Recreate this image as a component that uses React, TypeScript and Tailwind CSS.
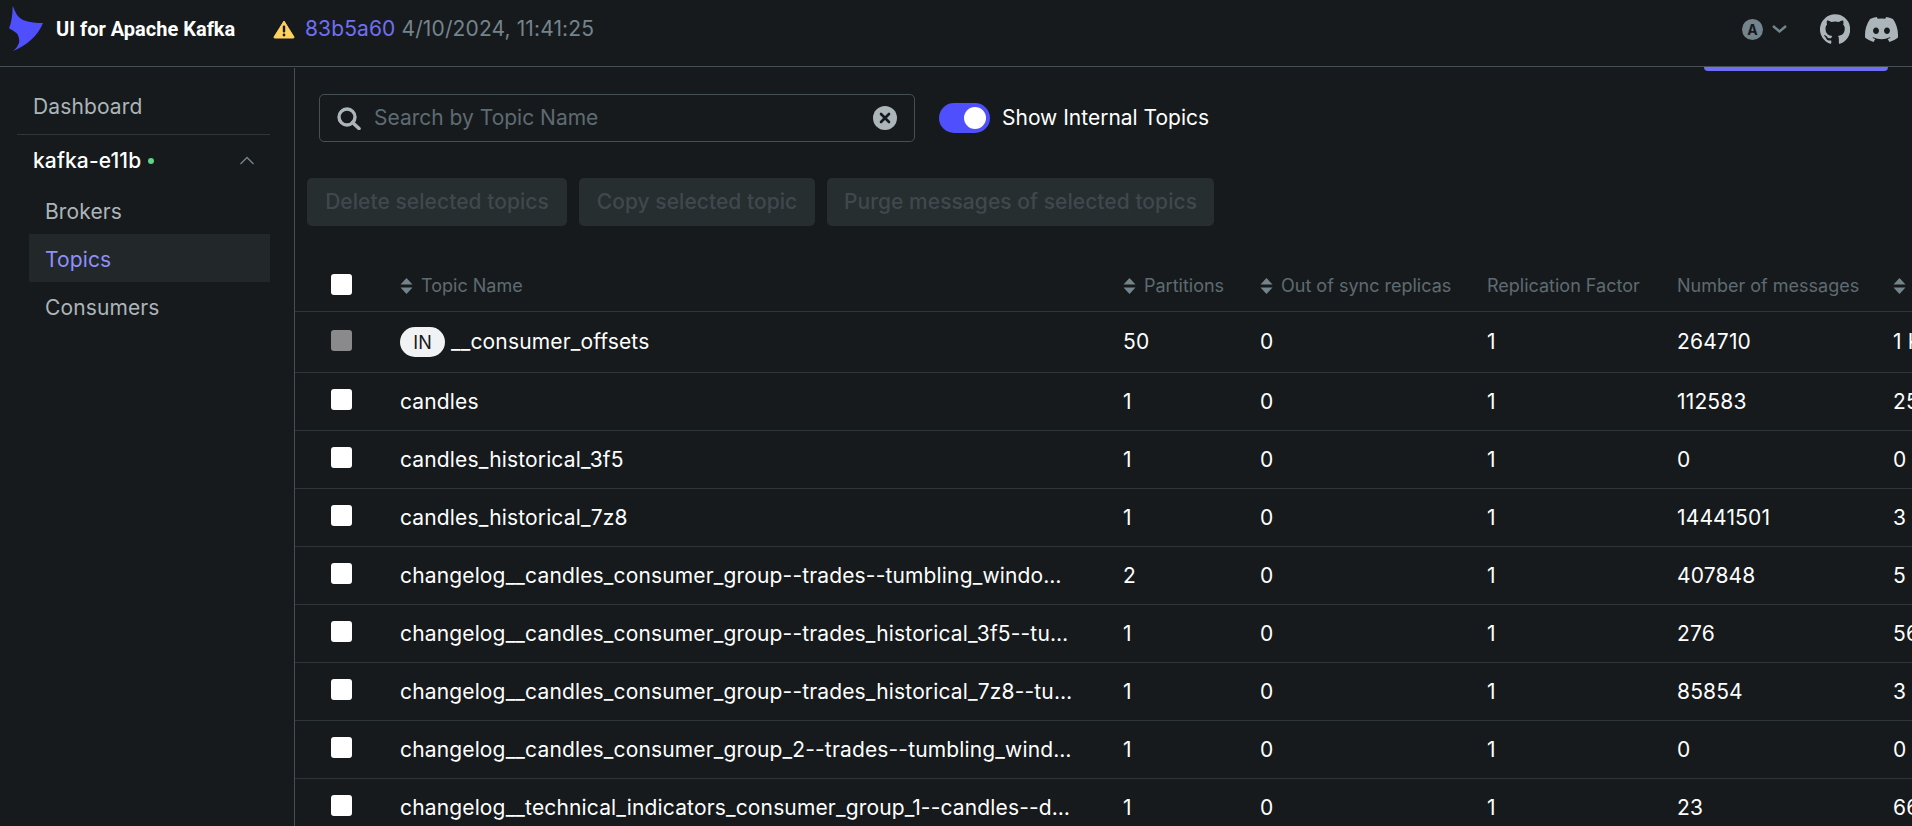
import React from "react";

const rows = [
  { name: "__consumer_offsets", internal: true, partitions: 50, replicas: 0, factor: 1, messages: 264710, size: "1 KB" },
  { name: "candles", partitions: 1, replicas: 0, factor: 1, messages: 112583, size: "25 MB" },
  { name: "candles_historical_3f5", partitions: 1, replicas: 0, factor: 1, messages: 0, size: "0" },
  { name: "candles_historical_7z8", partitions: 1, replicas: 0, factor: 1, messages: 14441501, size: "3 GB" },
  { name: "changelog__candles_consumer_group--trades--tumbling_windo…", partitions: 2, replicas: 0, factor: 1, messages: 407848, size: "5 MB" },
  { name: "changelog__candles_consumer_group--trades_historical_3f5--tu…", partitions: 1, replicas: 0, factor: 1, messages: 276, size: "56 KB" },
  { name: "changelog__candles_consumer_group--trades_historical_7z8--tu…", partitions: 1, replicas: 0, factor: 1, messages: 85854, size: "3 MB" },
  { name: "changelog__candles_consumer_group_2--trades--tumbling_wind…", partitions: 1, replicas: 0, factor: 1, messages: 0, size: "0" },
  { name: "changelog__technical_indicators_consumer_group_1--candles--d…", partitions: 1, replicas: 0, factor: 1, messages: 23, size: "66 KB" },
];

function SortIcon() {
  return (
    <svg width="13" height="16" viewBox="0 0 13 16" className="shrink-0 mr-[8px]">
      <path d="M6.5 0 L12.5 6.5 H0.5 Z M6.5 16 L0.5 9.5 H12.5 Z" fill="#73848c" />
    </svg>
  );
}

function Box({ disabled }: { disabled?: boolean }) {
  return (
    <div className={`w-[21px] h-[21px] rounded-[3px] ${disabled ? "bg-[#8a8a8c]" : "bg-white"}`} />
  );
}

function Logo() {
  return (
    <svg width="36" height="46" viewBox="0 0 36 46" className="shrink-0">
      <path
        d="M3.7 0 C6 5 8 10 11 12 C15 15.5 23 17 34 17 Q26.4 35.6 4 45 Q9 41 10.3 35.7 Q10 30 7.7 27.3 Q4 24.5 0 22.3 Q3.5 14 3.7 0 Z"
        fill="#4f4ffd"
      />
    </svg>
  );
}

function App() {
  return (
    <div className="h-[826px] w-[1912px] overflow-hidden bg-[#171a1c] font-['Inter',sans-serif] flex flex-col">
      <header className="h-[67px] shrink-0 border-b border-[#454f54] pb-[8px] flex items-center text-[21px] tracking-[0.12px]">
        <div className="pl-[9px] flex items-center">
          <Logo />
          <span className="ml-[11px] w-[200px] text-[20px] tracking-normal font-bold text-white font-['Roboto',sans-serif]">UI for Apache Kafka</span>
        </div>
        <svg width="22" height="19" viewBox="0 0 22 19" className="ml-[17px] shrink-0">
          <path d="M11 1 L21 17 a0.8 0.8 0 0 1 -1 1 H2 a0.8 0.8 0 0 1 -1 -1 Z" fill="#ffd25e" stroke="#ffd25e" strokeLinejoin="round" />
          <rect x="9.8" y="5.5" width="2.4" height="7" rx="1" fill="#171a1c" />
          <circle cx="11" cy="15" r="1.4" fill="#171a1c" />
        </svg>
        <span className="ml-[10px] text-[#6f6ff5]">83b5a60</span>
        <span className="ml-[6px] text-[#73848c]">4/10/2024, 11:41:25</span>
        <div className="ml-auto flex items-center pr-[14px]">
          <div className="w-[21px] h-[21px] rounded-full bg-[#73848c] text-[#171a1c] text-[14px] tracking-normal font-bold flex items-center justify-center">A</div>
          <svg width="15" height="8" viewBox="0 0 15 8" className="ml-[9px] shrink-0">
            <path d="M1 1 L7.5 6.5 L14 1" fill="none" stroke="#73848c" strokeWidth="2.4" />
          </svg>
          <svg width="30" height="30" viewBox="0 0 24 24" className="ml-[33px] shrink-0">
            <path
              fill="#abb5ba"
              d="M12 .3a12 12 0 0 0-3.8 23.4c.6.1.8-.3.8-.6v-2c-3.3.7-4-1.6-4-1.6-.6-1.4-1.4-1.8-1.4-1.8-1-.7.1-.7.1-.7 1.2.1 1.9 1.2 1.9 1.2 1 1.8 2.8 1.3 3.5 1 .1-.8.4-1.3.8-1.6-2.7-.3-5.5-1.3-5.5-6 0-1.2.5-2.3 1.3-3.1-.2-.4-.6-1.6 0-3.2 0 0 1-.3 3.4 1.2a11.5 11.5 0 0 1 6 0c2.3-1.5 3.3-1.2 3.3-1.2.7 1.6.3 2.8.1 3.2.8.8 1.3 1.9 1.3 3.2 0 4.6-2.8 5.6-5.5 5.9.4.4.8 1.1.8 2.2v3.3c0 .3.2.7.8.6A12 12 0 0 0 12 .3"
            />
          </svg>
          <svg width="33" height="27" viewBox="0 0 127.14 96.36" className="ml-[15px] shrink-0">
            <path
              fill="#abb5ba"
              d="M107.7 8.07A105.15 105.15 0 0 0 81.47 0a72.06 72.06 0 0 0-3.36 6.83 97.68 97.68 0 0 0-29.11 0A72.37 72.37 0 0 0 45.64 0a105.89 105.89 0 0 0-26.25 8.09C2.79 32.65-1.71 56.6.54 80.21a105.73 105.73 0 0 0 32.17 16.15 77.7 77.7 0 0 0 6.89-11.11 68.42 68.42 0 0 1-10.85-5.18c.91-.66 1.8-1.34 2.66-2a75.57 75.57 0 0 0 64.32 0c.87.71 1.76 1.39 2.66 2a68.68 68.68 0 0 1-10.87 5.19 77 77 0 0 0 6.89 11.1 105.25 105.25 0 0 0 32.19-16.14c2.64-27.38-4.51-51.11-18.9-72.15ZM42.45 65.69C36.18 65.69 31 60 31 53s5-12.74 11.43-12.74S54 46 53.89 53s-5.05 12.69-11.44 12.69Zm42.24 0C78.41 65.69 73.25 60 73.25 53s5-12.74 11.44-12.74S96.23 46 96.12 53s-5.04 12.69-11.43 12.69Z"
            />
          </svg>
        </div>
      </header>

      <div className="flex-1 flex min-h-0">
        <aside className="w-[295px] shrink-0 border-r border-[#454f54] mt-[1px] pt-[17px] text-[21px] tracking-[0.12px]">
          <div className="ml-[17px] w-[253px] h-[50px] pl-[16px] pb-[6px] border-b border-[#2f3639] text-[#abb5ba] flex items-center">Dashboard</div>
          <div className="ml-[17px] w-[253px] h-[51px] pl-[16px] pr-[15px] font-medium text-white flex items-center">
            kafka-e11b
            <span className="ml-[7px] w-[6px] h-[6px] rounded-full bg-[#5cd685]" />
            <svg width="16" height="9" viewBox="0 0 16 9" className="ml-auto shrink-0">
              <path d="M1.5 8 L8 1.5 L14.5 8" fill="none" stroke="#73848c" strokeWidth="1.4" />
            </svg>
          </div>
          <div className="ml-[29px] w-[241px] flex flex-col">
            <div className="h-[48px] pl-[16px] pt-[4px] text-[#abb5ba] flex items-center">Brokers</div>
            <div className="h-[48px] pl-[16px] pt-[4px] bg-[#22282a] text-[#8f8ffa] flex items-center">Topics</div>
            <div className="h-[48px] pl-[16px] pt-[4px] text-[#abb5ba] flex items-center">Consumers</div>
          </div>
        </aside>

        <main className="flex-1 min-w-0 overflow-hidden">
          <div className="h-[4px] flex justify-end pr-[24px] overflow-hidden">
            <div className="w-[184px] h-[4px] bg-[#6f6ff5] rounded-b-[4px]" />
          </div>
          <div className="pl-[24px] pt-[23px] flex items-center">
            <div className="w-[596px] h-[48px] rounded-[5px] border border-[#454f54] flex items-center pl-[17px] pr-[17px] text-[21px]">
              <svg width="24" height="23" viewBox="0 0 24 23" className="shrink-0">
                <circle cx="10" cy="10" r="8" fill="none" stroke="#abb5ba" strokeWidth="3.4" />
                <path d="M15.5 15.5 L22 21.5" stroke="#abb5ba" strokeWidth="3.6" strokeLinecap="round" />
              </svg>
              <span className="ml-[13px] text-[#5e6b72]">Search by Topic Name</span>
              <div className="ml-auto w-[24px] h-[24px] rounded-full bg-[#abb5ba] flex items-center justify-center">
                <svg width="12" height="12" viewBox="0 0 12 12">
                  <path d="M2 2 L10 10 M10 2 L2 10" stroke="#171a1c" strokeWidth="2.6" strokeLinecap="round" />
                </svg>
              </div>
            </div>
            <div className="ml-[24px] w-[51px] h-[30px] rounded-full bg-[#4f4ffd] flex items-center justify-end pr-[4px]">
              <div className="w-[22px] h-[22px] rounded-full bg-white" />
            </div>
            <span className="ml-[12px] text-[21px] text-white">Show Internal Topics</span>
          </div>

          <div className="pl-[12px] pt-[36px] flex gap-[12px] text-[21px] tracking-[0.05px] font-medium text-[#3f494d]">
            <div className="w-[260px] h-[48px] rounded-[5px] bg-[#262e30] flex items-center justify-center">Delete selected topics</div>
            <div className="w-[236px] h-[48px] rounded-[5px] bg-[#262e30] flex items-center justify-center">Copy selected topic</div>
            <div className="w-[387px] h-[48px] rounded-[5px] bg-[#262e30] flex items-center justify-center">Purge messages of selected topics</div>
          </div>

          <div className="mt-[32px] w-[1800px]">
            <div className="h-[54px] pt-[2px] border-b border-[#2f3639] flex items-center text-[18px] text-[#5e6b72]">
              <div className="w-[105px] pl-[36px] shrink-0 -mt-[2px]"><Box /></div>
              <div className="w-[723px] shrink-0 flex items-center"><SortIcon />Topic Name</div>
              <div className="w-[137px] shrink-0 flex items-center"><SortIcon />Partitions</div>
              <div className="w-[227px] shrink-0 flex items-center"><SortIcon />Out of sync replicas</div>
              <div className="w-[190px] shrink-0">Replication Factor</div>
              <div className="w-[216px] shrink-0">Number of messages</div>
              <div className="shrink-0 flex items-center"><SortIcon />Size</div>
            </div>
            {rows.map((row, index) => (
              <div
                key={row.name}
                className={`${index === 0 ? "h-[61px]" : "h-[58px]"} border-b border-[#2f3639] flex items-center text-[21px] tracking-[0.15px] text-white`}
              >
                <div className="w-[105px] pl-[36px] shrink-0 -mt-[4px]"><Box disabled={row.internal} /></div>
                <div className="w-[723px] shrink-0 flex items-center whitespace-nowrap">
                  {row.internal && (
                    <span className="mr-[6px] w-[45px] h-[30px] rounded-full bg-[#f1f2f3] text-[#171a1c] text-[18px] tracking-normal flex items-center justify-center">IN</span>
                  )}
                  {row.name}
                </div>
                <div className="w-[137px] shrink-0">{row.partitions}</div>
                <div className="w-[227px] shrink-0">{row.replicas}</div>
                <div className="w-[190px] shrink-0">{row.factor}</div>
                <div className="w-[216px] shrink-0">{row.messages}</div>
                <div className="shrink-0 whitespace-nowrap">{row.size}</div>
              </div>
            ))}
          </div>
        </main>
      </div>
    </div>
  );
}

export default App;
